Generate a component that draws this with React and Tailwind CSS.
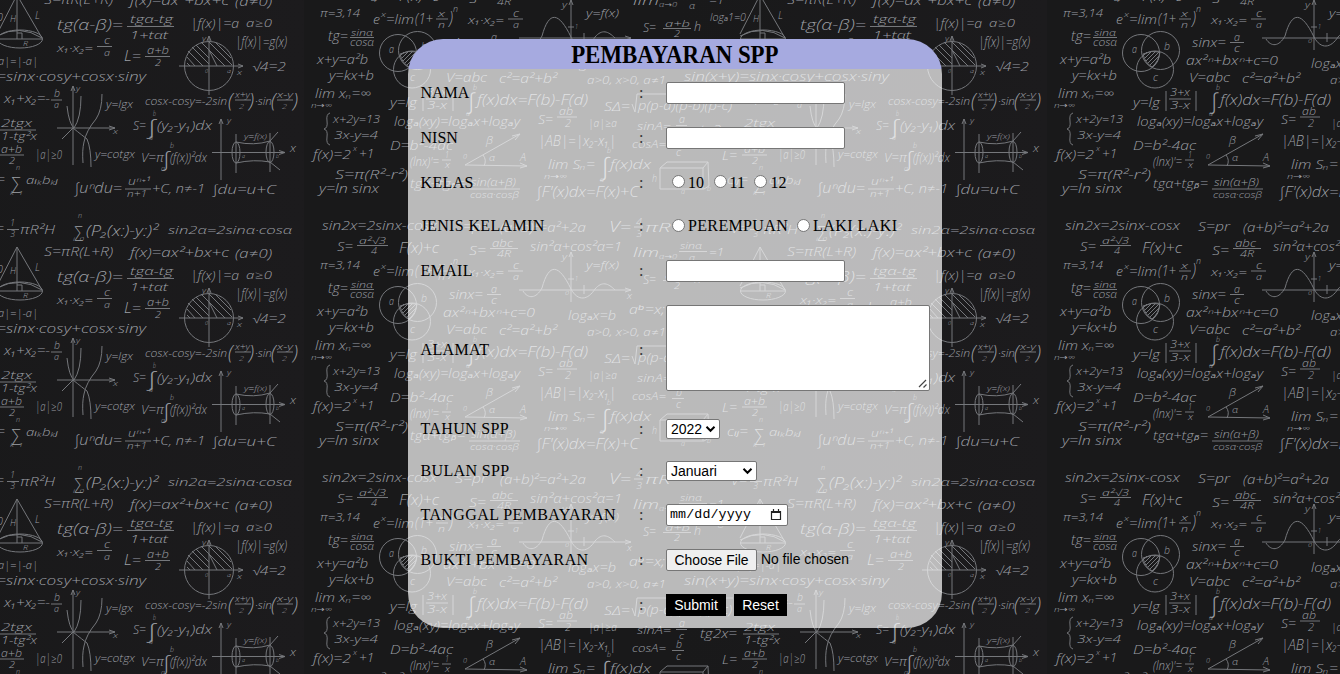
import React from "react";

const TILE_W = 743;
const TILE_H = 252;

/* [x, baseline, width, text, size] */
const NOTES_LEFT = [
  [322, 230, 115, "sin2x=2sinx-cosx", 12],
  [337, 251, 16, "S=", 13], [359, 244, 27, "a²√3", 9], [371, 254, 6, "4", 9],
  [399, 253, 40, "F(x)+c", 14],
  [320, 269, 40, "π=3,14", 11],
  [373, 276, 7, "e", 13], [381, 269, 5, "x", 8], [386, 276, 28, "=lim", 13], [415, 276, 18, "(1+", 15], [438, 269, 7, "x", 9], [438, 280, 7, "n", 9], [449, 276, 4, ")", 18], [453, 264, 5, "n", 9],
  [328, 293, 20, "tg=", 14], [351, 288, 22, "sinα", 9], [350, 298, 24, "cosα", 10],
  [317, 316, 51, "x+y=a²b", 13],
  [329, 332, 45, "y=kx+b", 12],
  [315, 350, 56, "lim xₙ=∞", 13], [311, 360, 21, "n→∞", 8],
  [333, 375, 47, "x+2y=13", 11], [334, 391, 44, "3x-y=4", 11],
  [313, 411, 38, "f(x)=2", 13], [353, 403, 4, "x", 8], [359, 410, 15, "+1", 12],
  [335, 431, 73, "S=π(R²-r²)", 13],
  [319, 445, 60, "y=ln sinx", 12],
  [455, 231, 32, "S=pr", 13], [500, 232, 86, "(a+b)²=a²+2a", 13],
  [469, 255, 17, "S=", 13], [492, 247, 21, "abc", 11], [497, 257, 14, "4R", 9],
  [530, 251, 92, "sin²α+cos²α=1", 12],
  [468, 276, 36, "x₁·x₂=", 11], [513, 269, 6, "c", 10], [513, 280, 6, "a", 9],
  [562, 260, 5, "y", 9], [586, 269, 33, "y=f(x)", 11], [627, 299, 5, "x", 9], [565, 295, 4, "0", 6], [575, 281, 3, "1", 7],
  [389, 305, 5, "a", 11], [421, 302, 6, "b", 11], [410, 333, 5, "c", 11],
  [449, 299, 34, "sinx=", 12], [491, 293, 6, "a", 10], [491, 304, 6, "c", 10],
  [443, 317, 92, "ax²ⁿ+bxⁿ+c=0", 12],
  [446, 334, 41, "V=abc", 13], [499, 335, 58, "c²=a²+b²", 13],
  [568, 320, 48, "logₐx=b", 13], [587, 336, 79, "a>0, x>0, a≠1", 10],
  [629, 314, 36, "aᵇ=x;", 12],
  [390, 359, 27, "y=lg", 13], [427, 348, 20, "3+x", 10], [427, 361, 20, "3-x", 10],
  [473, 342, 4, "b", 8], [466, 368, 4, "a", 8], [468, 361, 7, "∫", 22], [477, 357, 111, "f(x)dx=F(b)-F(d)", 14],
  [394, 378, 126, "logₐ(xy)=logₐx+logₐy", 13],
  [538, 376, 15, "S=", 13], [559, 367, 14, "ab", 11], [565, 379, 6, "2", 10], [588, 379, 29, "|a|≥a", 11],
  [390, 402, 63, "D=b²-4ac", 13],
  [486, 396, 7, "β", 10], [489, 413, 6, "α", 9], [520, 413, 6, "A", 10], [463, 411, 4, "0", 8],
  [410, 418, 29, "(lnx)'=", 12], [445, 410, 4, "1", 9], [445, 420, 5, "x", 9],
  [538, 398, 78, "|AB|=|x₂-x₁|", 15],
  [548, 421, 47, "lim Sₙ=", 13], [544, 431, 23, "n→∞", 8], [601, 427, 8, "∫", 24], [607, 405, 4, "b", 8], [600, 434, 4, "a", 8], [610, 421, 41, "f(x)dx", 13],
  [410, 440, 55, "tgα+tgᵦ=", 12], [471, 438, 45, "sin(α+β)", 10], [470, 450, 49, "cosα·cosβ", 9],
  [537, 449, 102, "∫F'(x)dx=F(x)+C", 14],
  [604, 363, 26, "SΔ=", 12], [638, 362, 94, "p(p-a)(p-b)(p-c)", 12],
  [637, 382, 34, "sinA=", 11], [679, 375, 6, "a", 10], [679, 387, 5, "c", 9],
  [632, 400, 34, "cosA=", 11], [676, 396, 6, "b", 11], [676, 408, 5, "c", 10],
  [652, 434, 5, "h", 10], [681, 446, 4, "a", 8], [707, 443, 4, "b", 8],
  [727, 436, 21, "cᵢⱼ=", 12],
  [609, 232, 22, "V=", 14], [636, 225, 6, "4", 9], [636, 237, 6, "3", 9], [645, 232, 33, "πR³", 13],
  [643, 284, 13, "S=", 12], [665, 279, 25, "a+b", 9], [674, 289, 6, "2", 9], [694, 283, 7, "h", 12], [710, 273, 36, "logₐ1=0", 11],
  [633, 257, 26, "lim", 12], [659, 259, 18, "α→0", 7], [680, 249, 22, "sinα", 9], [689, 261, 6, "α", 9], [709, 256, 15, "=1", 11],
  [684, 333, 205, "sin(x+y)=sinx·cosy+cosx·siny", 12],
  [735, 317, 46, "|a|=|-a|", 11],
  [700, 386, 37, "tg2x=", 12], [744, 379, 31, "2tgx", 10], [744, 392, 36, "1-tg²x", 10],
  [722, 412, 15, "L=", 13], [744, 405, 21, "a+b", 10], [752, 416, 6, "2", 9], [778, 411, 27, "|a|≥0", 12],
];

const NOTES_RIGHT = [
  [-12, 233, 16, "V=", 13], [10, 226, 5, "1", 9], [10, 237, 5, "3", 9], [20, 234, 35, "πR²H", 13],
  [73, 237, 11, "∑", 15], [78, 218, 4, "n", 7], [73, 241, 11, "i=0", 6], [86, 236, 72, "(P₂(x:)-y:)²", 14],
  [168, 234, 124, "sin2α=2sinα·cosα", 11],
  [10, 274, 6, "H", 9], [35, 271, 5, "L", 10], [23, 298, 5, "R", 7],
  [44, 256, 69, "S=πR(L+R)", 13], [130, 257, 99, "f(x)=ax²+bx+c", 12], [235, 258, 37, "(a≠0)", 12],
  [57, 282, 66, "tg(α-β)=", 14], [130, 275, 43, "tgα-tg", 11], [130, 291, 38, "1+tαt", 10],
  [190, 280, 49, "|f(x)|=a", 13], [246, 279, 26, "a≥0", 11],
  [57, 304, 36, "x₁·x₂=", 11], [104, 296, 6, "c", 10], [104, 308, 6, "a", 9],
  [124, 313, 17, "L=", 14], [147, 306, 22, "a+b", 10], [155, 318, 6, "2", 9],
  [202, 293, 4, "y", 7], [237, 327, 5, "x", 8], [205, 325, 3, "0", 6], [227, 325, 4, "a", 6],
  [235, 299, 52, "|f(x)|=g(x)", 14], [252, 323, 34, "√4=2", 12],
  [4, 355, 46, "x₁+x₂=-", 12], [54, 349, 6, "b", 10], [54, 360, 5, "a", 9],
  [76, 343, 4, "y", 8], [113, 386, 5, "x", 8],
  [106, 360, 27, "y=lgx", 10], [95, 410, 40, "y=cotgx", 10],
  [145, 357, 82, "cosx-cosy=-2sin", 11], [228, 360, 5, "(", 21], [235, 350, 15, "x+y", 9], [239, 361, 5, "2", 8], [249, 360, 5, ")", 21], [255, 357, 17, "·sin", 11], [271, 360, 5, "(", 21], [277, 350, 16, "x-y", 9], [282, 361, 5, "2", 8], [293, 360, 5, ")", 21],
  [133, 382, 13, "S=", 13], [148, 386, 8, "∫", 20], [153, 368, 3, "b", 7], [149, 392, 4, "a", 7], [157, 382, 55, "(y₂-y₁)dx", 13],
  [141, 414, 23, "V=π", 13], [163, 418, 7, "∫", 20], [170, 400, 4, "b", 8], [161, 423, 4, "a", 8], [170, 414, 37, "(f(x))²dx", 13],
  [10, 441, 12, "∑", 17], [16, 422, 4, "n", 7], [10, 447, 13, "k=1", 6], [26, 436, 32, "aᵢₖbₖⱼ", 11],
  [75, 445, 47, "∫uⁿdu=", 14], [128, 437, 22, "uⁿ⁺¹", 10], [127, 449, 20, "n+1", 9], [152, 445, 53, "+C, n≠-1", 12],
  [213, 446, 63, "∫du=u+C", 13],
  [227, 375, 4, "y", 8], [244, 391, 23, "y=f(x)", 8], [290, 404, 6, "x", 10], [242, 410, 3, "a", 6], [276, 410, 3, "b", 6],
];

const LINES_LEFT =
  "M357 245.500H388 M436 271H448 M350 289.500H374 M490 248.500H518 M508 271H523 M487 294.500H501 M426 351H448 M423 343V363 M453 343V363 M557 369H577 M442 412H451 M469 441H520 M676 377.500H687 M672 398.500H684 M634 227H643 M663 280.500H691 M679 251.500H707 M743 382H779 M742 407H767 M632 356L635 364L637 346H733";
const SHAPES_LEFT =
  "M330 365Q326 366 327 373Q328 380 324 381Q328 382 327 389Q326 396 330 397 M519 290H631L625 288M631 290L625 292 M571 302V252L569 257M571 252L573 257 M523 291C528 299 536 299 542 288C549 262 559 264 571 289C578 302 588 300 595 289C602 281 608 283 615 290 M584 285V294 M568 279H574 M465 417L527 418L520 415M527 418L520 420 M465 417L520 386L512 388M520 386L515 392 M483 407Q487 412 484 418 M660 420L667 414H708L709 438L704 441H660V420H703L708 414M703 420V441";
const HATCH_LEFT = "M401 307L404 304 M402 310L409 303 M403 313L413 303 M405 315L416 304 M407 317L416 308 M410 318L415 313 M400 306Q408 302 417 304Q416 313 409 319Q402 315 400 306";

const LINES_RIGHT =
  "M7 229.500H19 M127 278.500H174 M97 298.500H112 M145 308.500H170 M51 352H62 M235 352H251 M277 352H293 M125 441H151";
const SHAPES_RIGHT =
  "M17 247L-3 286 M17 247L42 290 M17 247V291 M-3 291H42 M17 285H22V291 M-3 288Q20 276 42 290 M179 318H243L238 316M243 318L238 320 M209 347V288L207 293M209 288L211 293 M57 380H115L109 378M115 380L109 382 M73 417V338L71 343M73 338L75 343 M67 358Q69 376 74 380Q81 370 81 348 M62 391L73 380Q83 388 87 391Q91 400 91 419 M102 346Q102 362 96 371Q86 383 84 394Q82 402 83 415 M221 432V371L219 376M221 371L223 376 M212 404.500H285L279 402.500M285 404.500L279 406.500 M236 386V425 M270 385V424 M236 394Q254 398 270 393L278 384 M236 415Q254 411 270 414L280 422";
const HATCH_RIGHT =
  "M187 309L195 318 M188 303L203 318 M192 299L209 316 M196 297L209 310 M201 294L225 318 M208 293L232 317 M216 295L231 310 M187 315L190 318 M209 302L217 318";

function Notes({ items }) {
  return items.map(([x, y, w, text, size], i) => (
    <text key={i} x={x} y={y} fontSize={size} textLength={w} lengthAdjust="spacingAndGlyphs">
      {text}
    </text>
  ));
}

function Chalkboard() {
  return (
    <svg className="absolute inset-0 h-full w-full" viewBox="0 0 1340 674" aria-hidden="true">
      <defs>
        <linearGradient id="slate" x1="0" x2="1" y1="0" y2="0">
          <stop offset="0" stopColor="#19191a" />
          <stop offset="0.5" stopColor="#19191a" />
          <stop offset="1" stopColor="#1c1b1d" />
        </linearGradient>
        <g id="board">
          <g fill="#9c9fa4" fontFamily="'Open Sans', 'DejaVu Sans', sans-serif" fontWeight="300" fontStyle="italic">
            <Notes items={NOTES_LEFT} />
            <g transform="translate(743 0)">
              <Notes items={NOTES_RIGHT} />
            </g>
          </g>
          <g fill="none" stroke="#75777b" strokeWidth="1">
            <path d={LINES_LEFT} />
            <path d={SHAPES_LEFT} />
            <path d={HATCH_LEFT} />
            <circle cx="398" cy="305" r="18.500" />
            <circle cx="417.500" cy="302.500" r="19" />
            <circle cx="412" cy="321.500" r="18.500" />
            <g transform="translate(743 0)">
              <path d={LINES_RIGHT} />
              <path d={SHAPES_RIGHT} />
              <path d={HATCH_RIGHT} />
              <ellipse cx="20" cy="291" rx="22.500" ry="9" />
              <circle cx="209" cy="318" r="24.500" />
              <ellipse cx="236" cy="404.500" rx="4" ry="10.500" />
              <ellipse cx="270" cy="404" rx="4" ry="10.500" />
            </g>
          </g>
        </g>
      </defs>
      {[-1, 0, 1].map((c) =>
        [-1, 0, 1].map((r) => (
          <rect key={`${c}${r}`} x={304 + c * TILE_W} y={208 + r * TILE_H} width={TILE_W} height={TILE_H} fill="url(#slate)" />
        ))
      )}
      {[-1, 0, 1].map((c) =>
        [-1, 0, 1].map((r) => <use key={`${c}${r}`} href="#board" x={c * TILE_W} y={r * TILE_H} />)
      )}
    </svg>
  );
}

function Row({ label, height, tracking = "tracking-[0.350px]", children }) {
  return (
    <div className={`flex items-center pl-[12.500px] ${height}`}>
      <div className={`w-[218.500px] ${tracking}`}>{label}</div>
      <div className="w-[27px] text-[#333]">:</div>
      {children}
    </div>
  );
}

function TextInput() {
  return <input type="text" className="h-[22px] w-[179px] rounded-[2px] border border-[#767676] bg-white px-1" />;
}

function Radio({ name, label, className }) {
  return (
    <label className={`flex items-center ${className}`}>
      <input
        type="radio"
        name={name}
        className="mr-[3px] mb-[2px] h-[13px] w-[13px] appearance-none rounded-full border border-[#767676] bg-white"
      />
      {label}
    </label>
  );
}

function Picker({ value, width }) {
  return (
    <div
      className={`flex h-5 items-center justify-between rounded-[2px] border border-[#767676] bg-white pr-[3px] pl-[4px] font-['Liberation_Sans',sans-serif] text-sm ${width}`}
    >
      {value}
      <svg width="11" height="8" viewBox="0 0 11 8" fill="none" stroke="#000" strokeWidth="2">
        <path d="M1.500 1.800L5.500 5.800L9.500 1.800" />
      </svg>
    </div>
  );
}

const ACTION = "h-[22px] bg-black text-center font-['Liberation_Sans',sans-serif] text-sm leading-[22px] text-white";

export default function App() {
  return (
    <div className="relative h-[674px] w-[1340px] overflow-hidden bg-[#1a1a1c] pt-[39.400px] font-['Liberation_Serif',serif] text-base text-black">
      <Chalkboard />
      <form className="relative ml-[408px] h-[589px] w-[534px] overflow-hidden rounded-[35px]">
        <h1 className="flex h-[30px] items-center justify-center bg-[#a6aae0] text-[26px] leading-[30px] font-bold">
          <span className="block scale-x-[0.880] pt-px whitespace-nowrap">PEMBAYARAN SPP</span>
        </h1>
        <div className="h-[559px] bg-white/70 pt-px">
          <Row label="NAMA" height="h-[45px]" tracking="tracking-normal"><TextInput /></Row>
          <Row label="NISN" height="h-[46px]" tracking="tracking-normal"><TextInput /></Row>
          <Row label="KELAS" height="h-[43px]">
            <Radio name="kelas" label="10" className="ml-[6px]" />
            <Radio name="kelas" label="11" className="ml-[9.500px]" />
            <Radio name="kelas" label="12" className="ml-[9.500px]" />
          </Row>
          <Row label="JENIS KELAMIN" height="h-[44px]">
            <Radio name="jk" label="PEREMPUAN" className="ml-[6px] tracking-[0.350px]" />
            <Radio name="jk" label="LAKI LAKI" className="ml-[9px] tracking-[0.450px]" />
          </Row>
          <Row label="EMAIL" height="h-[45px]"><TextInput /></Row>
          <Row label="ALAMAT" height="h-[114px]">
            <div className="mb-[5px] flex h-[86px] w-[264px] items-end justify-end rounded-[2px] border border-[#767676] bg-white p-[2px]">
              <svg width="9" height="9" viewBox="0 0 9 9" stroke="#444" strokeWidth="1.200">
                <path d="M1 8L8 1M5.500 8.500L8.500 5.500" />
              </svg>
            </div>
          </Row>
          <Row label="TAHUN SPP" height="h-[43px]"><Picker value="2022" width="w-[54px]" /></Row>
          <Row label="BULAN SPP" height="h-[42px]"><Picker value="Januari" width="w-[91px]" /></Row>
          <Row label="TANGGAL PEMBAYARAN" height="h-[45px]" tracking="tracking-[0.400px]">
            <div className="flex h-[22px] w-[122px] items-center justify-between rounded-[2px] border border-[#767676] bg-white pr-[5px] pl-[3px] font-['Liberation_Mono',monospace] text-[13.333px] tracking-[0.100px]">
              mm/dd/yyyy
              <svg width="12" height="12" viewBox="0 0 12 12" fill="none" stroke="#222">
                <path d="M1.500 2.500H10.500V10.500H1.500Z M3.500 0V2 M8.500 0V2" strokeWidth="1.200" />
                <path d="M1 3H11" strokeWidth="2" />
              </svg>
            </div>
          </Row>
          <Row label="BUKTI PEMBAYARAN" height="h-[45px]" tracking="tracking-[0.400px]">
            <div className="flex items-center gap-1 font-['Liberation_Sans',sans-serif] text-[13.900px]">
              <button type="button" className="h-[22px] w-[91px] rounded-[2px] border border-[#767676] bg-[#efefef] leading-5">
                Choose File
              </button>
              <span>No file chosen</span>
            </div>
          </Row>
          <Row label="" height="h-[45px]">
            <button type="button" className={`w-[60px] ${ACTION}`}>Submit</button>
            <button type="button" className={`ml-2 w-[53px] ${ACTION}`}>Reset</button>
          </Row>
        </div>
      </form>
    </div>
  );
}
